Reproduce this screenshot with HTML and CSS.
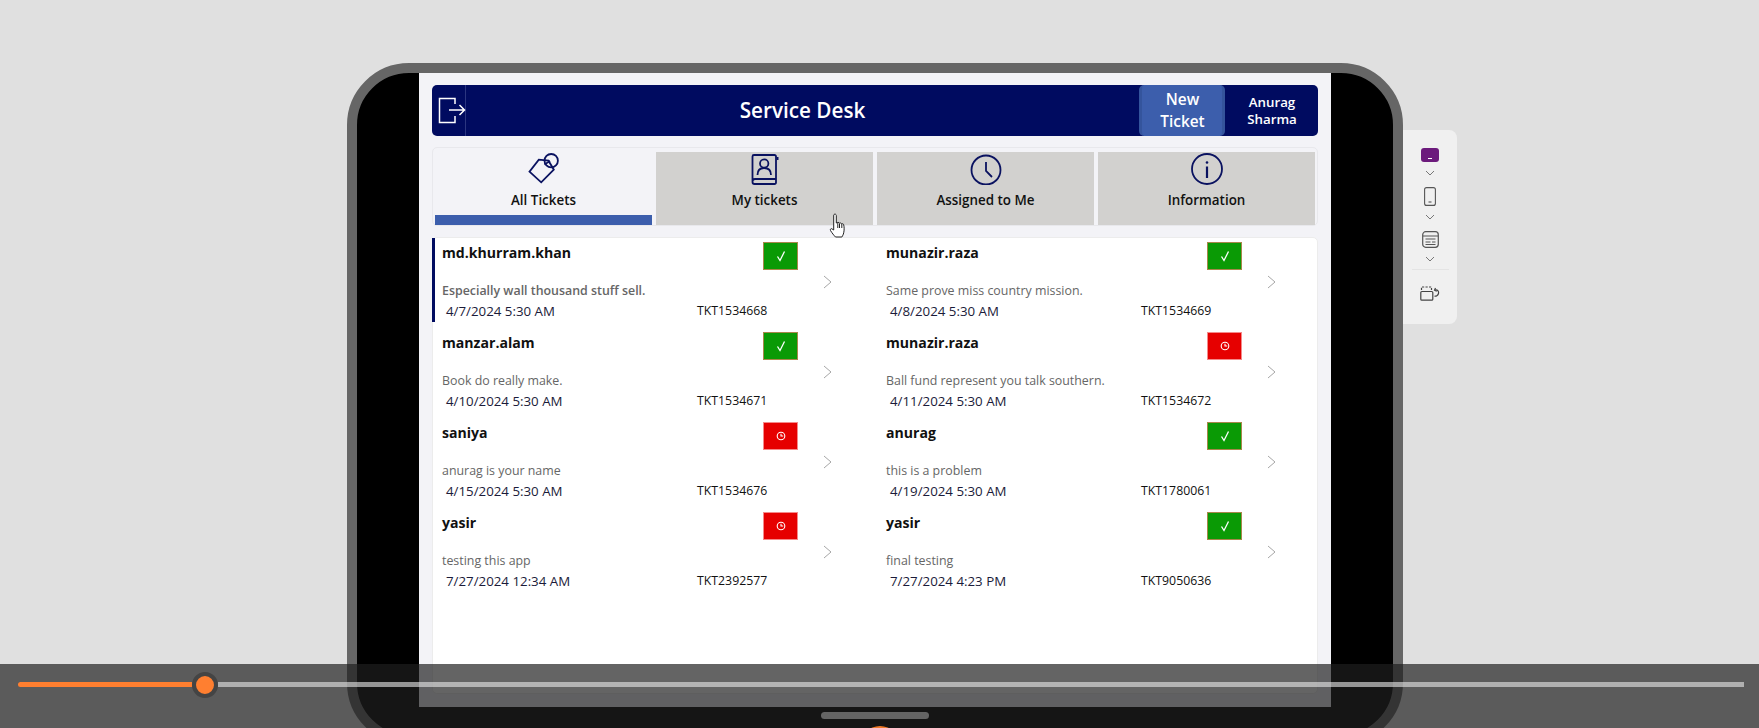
FILE: index.html
```html
<!DOCTYPE html>
<html lang="en">
<head>
  <meta charset="UTF-8" />
  <title>Service Desk</title>
  <link rel="stylesheet" href="styles.css">
</head>
<body>
  <div class="stage">
    <div class="device">
      <div class="screen">
        <header class="topbar">
          <div class="logout">
            <svg width="34" height="51" viewBox="0 0 34 51" fill="none" stroke="#fff" stroke-width="1.5"><path d="M23 19v-5.500H7.500v24H23V31"/><path d="M17 25h15.500M27.500 20l5 5-5 5"/></svg>
          </div>
          <h1 class="title">Service Desk</h1>
          <div class="new-ticket">New<br>Ticket</div>
          <div class="user">Anurag<br>Sharma</div>
        </header>

        <nav class="tabs">
          <div class="tab active">
            <svg class="tab-icon" viewBox="0 0 32 32" fill="none" stroke="#0a1260" stroke-width="1.800"><path d="M1.500 18.700 13.200 29.300 25.800 16.700 20.500 7.700 10.800 6.700z"/><circle cx="23.200" cy="7.700" r="6.700"/><path d="M16.500 11.500 22 8"/></svg>
            <span class="tab-label">All Tickets</span>
          </div>
          <div class="tab">
            <svg class="tab-icon" viewBox="0 0 32 32" fill="none" stroke="#0a1260" stroke-width="1.800"><path d="M27 26V3.500a1.500 1.500 0 0 0-1.500-1.500H5a1.500 1.500 0 0 0-1.500 1.500V29A2 2 0 0 0 5.500 31H25.500a1.500 1.500 0 0 0 1.500-1.500V26H6a2.500 2.500 0 0 0-2.500 2.500"/><circle cx="15.200" cy="10.500" r="4.200"/><path d="M8.500 22c0-5 3-7 6.700-7s6.800 2 6.800 7"/><path d="M27.500 4h2v3h-2" fill="#0a1260" stroke="none"/></svg>
            <span class="tab-label">My tickets</span>
          </div>
          <div class="tab">
            <svg class="tab-icon" viewBox="0 0 32 32" fill="none" stroke="#0a1260" stroke-width="1.800"><circle cx="16" cy="17" r="14.500"/><path d="M16 9v9l6 6"/></svg>
            <span class="tab-label">Assigned to Me</span>
          </div>
          <div class="tab">
            <svg class="tab-icon" viewBox="0 0 32 32" fill="none" stroke="#0a1260" stroke-width="1.800"><circle cx="16" cy="16" r="15"/><path d="M16 13.500V25" stroke-width="2.200"/><circle cx="16" cy="9.500" r="1.300" fill="#0a1260" stroke="none"/></svg>
            <span class="tab-label">Information</span>
          </div>
        </nav>

        <section class="list">
          <div class="ticket selected">
            <div class="ticket-main">
              <div class="ticket-top"><span class="name">md.khurram.khan</span><span class="status ok"><svg width="12" height="12" viewBox="0 0 12 12" fill="none" stroke="#fff" stroke-width="1.300"><path d="M2.500 6.500 5 10.500 9.500 1.500"/></svg></span></div>
              <p class="desc">Especially wall thousand stuff sell.</p>
              <div class="ticket-meta"><span class="date">4/7/2024 5:30 AM</span><span class="code">TKT1534668</span></div>
            </div>
            <svg class="chev" width="9" height="14" viewBox="0 0 9 14" fill="none" stroke="#a6a6a6"><path d="M1 1l7 6-7 6"/></svg>
          </div>
          <div class="ticket">
            <div class="ticket-main">
              <div class="ticket-top"><span class="name">munazir.raza</span><span class="status ok"><svg width="12" height="12" viewBox="0 0 12 12" fill="none" stroke="#fff" stroke-width="1.300"><path d="M2.500 6.500 5 10.500 9.500 1.500"/></svg></span></div>
              <p class="desc">Same prove miss country mission.</p>
              <div class="ticket-meta"><span class="date">4/8/2024 5:30 AM</span><span class="code">TKT1534669</span></div>
            </div>
            <svg class="chev" width="9" height="14" viewBox="0 0 9 14" fill="none" stroke="#a6a6a6"><path d="M1 1l7 6-7 6"/></svg>
          </div>
          <div class="ticket">
            <div class="ticket-main">
              <div class="ticket-top"><span class="name">manzar.alam</span><span class="status ok"><svg width="12" height="12" viewBox="0 0 12 12" fill="none" stroke="#fff" stroke-width="1.300"><path d="M2.500 6.500 5 10.500 9.500 1.500"/></svg></span></div>
              <p class="desc">Book do really make.</p>
              <div class="ticket-meta"><span class="date">4/10/2024 5:30 AM</span><span class="code">TKT1534671</span></div>
            </div>
            <svg class="chev" width="9" height="14" viewBox="0 0 9 14" fill="none" stroke="#a6a6a6"><path d="M1 1l7 6-7 6"/></svg>
          </div>
          <div class="ticket">
            <div class="ticket-main">
              <div class="ticket-top"><span class="name">munazir.raza</span><span class="status late"><svg width="10" height="10" viewBox="0 0 10 10" fill="none" stroke="#fff" stroke-width="1.100"><circle cx="5" cy="5" r="3.800"/><path d="M5 2.800V5h2.200"/></svg></span></div>
              <p class="desc">Ball fund represent you talk southern.</p>
              <div class="ticket-meta"><span class="date">4/11/2024 5:30 AM</span><span class="code">TKT1534672</span></div>
            </div>
            <svg class="chev" width="9" height="14" viewBox="0 0 9 14" fill="none" stroke="#a6a6a6"><path d="M1 1l7 6-7 6"/></svg>
          </div>
          <div class="ticket">
            <div class="ticket-main">
              <div class="ticket-top"><span class="name">saniya</span><span class="status late"><svg width="10" height="10" viewBox="0 0 10 10" fill="none" stroke="#fff" stroke-width="1.100"><circle cx="5" cy="5" r="3.800"/><path d="M5 2.800V5h2.200"/></svg></span></div>
              <p class="desc">anurag is your name</p>
              <div class="ticket-meta"><span class="date">4/15/2024 5:30 AM</span><span class="code">TKT1534676</span></div>
            </div>
            <svg class="chev" width="9" height="14" viewBox="0 0 9 14" fill="none" stroke="#a6a6a6"><path d="M1 1l7 6-7 6"/></svg>
          </div>
          <div class="ticket">
            <div class="ticket-main">
              <div class="ticket-top"><span class="name">anurag</span><span class="status ok"><svg width="12" height="12" viewBox="0 0 12 12" fill="none" stroke="#fff" stroke-width="1.300"><path d="M2.500 6.500 5 10.500 9.500 1.500"/></svg></span></div>
              <p class="desc">this is a problem</p>
              <div class="ticket-meta"><span class="date">4/19/2024 5:30 AM</span><span class="code">TKT1780061</span></div>
            </div>
            <svg class="chev" width="9" height="14" viewBox="0 0 9 14" fill="none" stroke="#a6a6a6"><path d="M1 1l7 6-7 6"/></svg>
          </div>
          <div class="ticket">
            <div class="ticket-main">
              <div class="ticket-top"><span class="name">yasir</span><span class="status late"><svg width="10" height="10" viewBox="0 0 10 10" fill="none" stroke="#fff" stroke-width="1.100"><circle cx="5" cy="5" r="3.800"/><path d="M5 2.800V5h2.200"/></svg></span></div>
              <p class="desc">testing this app</p>
              <div class="ticket-meta"><span class="date">7/27/2024 12:34 AM</span><span class="code">TKT2392577</span></div>
            </div>
            <svg class="chev" width="9" height="14" viewBox="0 0 9 14" fill="none" stroke="#a6a6a6"><path d="M1 1l7 6-7 6"/></svg>
          </div>
          <div class="ticket">
            <div class="ticket-main">
              <div class="ticket-top"><span class="name">yasir</span><span class="status ok"><svg width="12" height="12" viewBox="0 0 12 12" fill="none" stroke="#fff" stroke-width="1.300"><path d="M2.500 6.500 5 10.500 9.500 1.500"/></svg></span></div>
              <p class="desc">final testing</p>
              <div class="ticket-meta"><span class="date">7/27/2024 4:23 PM</span><span class="code">TKT9050636</span></div>
            </div>
            <svg class="chev" width="9" height="14" viewBox="0 0 9 14" fill="none" stroke="#a6a6a6"><path d="M1 1l7 6-7 6"/></svg>
          </div>
        </section>

        <!-- mouse pointer caught in the shot -->
        <svg class="pointer" width="18" height="26" viewBox="0 0 18 26" fill="#fff" stroke="#222" stroke-width="1"><path d="M5 1.500c1-.8 2.200-.3 2.300 1V10l1.500-.6c.9-.2 1.500.2 1.700.8.900-.5 1.700-.2 2 .6 1-.4 2 0 2.200 1 .6 2.500.6 5.500 0 8-.4 2-1.200 3-1.800 4.200H6.500C5 22.500 3 20 1.500 17.500c-.6-1 .2-2 1.200-1.800l2 1.300V3c0-.7 0-1.200.3-1.500z"/><path d="M8.800 10v5M10.500 10.500V15M12.800 11v4" fill="none"/></svg>
      </div>
      <div class="home-bar"></div>
    </div>

    <aside class="side">
      <span class="swatch"></span>
      <svg class="down" width="10" height="6" viewBox="0 0 10 6" fill="none" stroke="#777"><path d="M1 1l4 4 4-4"/></svg>
      <svg class="side-icon" width="12" height="19" viewBox="0 0 12 19" fill="none" stroke="#555" stroke-width="1.100"><rect x=".6" y=".6" width="10.800" height="17.800" rx="2"/><path d="M4.500 15h3"/></svg>
      <svg class="down" width="10" height="6" viewBox="0 0 10 6" fill="none" stroke="#777"><path d="M1 1l4 4 4-4"/></svg>
      <svg class="side-icon" width="17" height="17" viewBox="0 0 17 17" fill="none" stroke="#555" stroke-width="1.200"><rect x=".7" y=".7" width="15.600" height="15.600" rx="3"/><path d="M1 5h15M3.500 8h10M3.500 11h5M10 11h3.500M3.500 13.500h10" stroke-width="1"/></svg>
      <svg class="down" width="10" height="6" viewBox="0 0 10 6" fill="none" stroke="#777"><path d="M1 1l4 4 4-4"/></svg>
      <div class="side-line"></div>
      <svg class="side-icon" width="20" height="15" viewBox="0 0 20 15" fill="none" stroke="#444" stroke-width="1.200"><path d="M1.500 4V1h10v3" stroke-dasharray="2.200 1.300"/><rect x=".8" y="5.500" width="12" height="8.700" rx="1"/><path d="M15 4c3-.5 4 1.500 3.500 3.500S16 10.500 14.500 10"/><path d="M15.500 2 14.500 4.300 16.800 5.300"/></svg>
    </aside>
  </div>

  <div class="player">
    <span class="fill"></span>
    <span class="thumb"></span>
    <span class="rest"></span>
    <span class="peek"></span>
  </div>
</body>
</html>
```

FILE: styles.css
```css
body {
  margin: 0;
  height: 728px;
  overflow: hidden;
  background: #e0e0e0;
  font-family: "Open Sans", sans-serif;
  position: relative;
}
.stage {
  display: flex;
  align-items: flex-start;
  padding: 63px 0 0 347px;
}
.device {
  box-sizing: border-box;
  flex: none;
  width: 1056px;
  height: 682px;
  border: 10px solid #666;
  border-radius: 62px;
  background: #000;
  display: flex;
  flex-direction: column;
  align-items: center;
}
.screen {
  box-sizing: border-box;
  width: 912px;
  height: 634px;
  padding: 12px 13px 13px;
  background: #f3f3f7;
  display: flex;
  flex-direction: column;
  position: relative;
}
.home-bar {
  width: 108px;
  height: 7px;
  margin-top: 5px;
  border-radius: 4px;
  background: #fff;
}

/* top bar */
.topbar {
  height: 51px;
  flex: none;
  display: flex;
  background: #000b60;
  border-radius: 5px;
  color: white;
}
.logout {
  width: 33px;
  border-right: 1px solid #2b3680;
}
.logout svg {
  display: block;
}
.title {
  flex: 1;
  margin: 0;
  text-align: center;
  font-size: 20.700px;
  font-weight: 600;
  line-height: 51px;
}
.new-ticket {
  box-sizing: border-box;
  width: 86px;
  padding: 4px 0 0 1px;
  background: #3c5eac;
  border: 3px solid #34549c;
  border-top-width: 0;
  border-bottom-width: 0;
  border-radius: 5px;
  text-align: center;
  font-size: 15.400px;
  font-weight: 600;
  line-height: 22px;
}
.user {
  box-sizing: border-box;
  width: 93px;
  padding: 9px 0 0 1px;
  text-align: center;
  font-size: 13.300px;
  font-weight: 600;
  line-height: 17px;
}

/* tabs */
.tabs {
  box-sizing: border-box;
  height: 79px;
  flex: none;
  margin-top: 11px;
  padding: 4px 2px 0;
  display: grid;
  grid-template-columns: repeat(4, 217px);
  gap: 4px;
  border: 1px solid #e8e8ec;
  border-radius: 5px;
}
.tab {
  box-sizing: border-box;
  height: 73px;
  display: flex;
  flex-direction: column;
  align-items: center;
  background: #d2d1cf;
}
.tab.active {
  background: transparent;
  border-bottom: 10px solid #3c5eac;
}
.tab-icon {
  width: 32px;
  height: 32px;
  margin-top: 1px;
}
.tab-label {
  margin-top: 6px;
  font-size: 13.400px;
  font-weight: 600;
  line-height: 18px;
  color: #111;
}

/* ticket list */
.list {
  box-sizing: border-box;
  height: 457px;
  flex: none;
  margin-top: 11px;
  display: grid;
  grid-template-columns: 444px 440px;
  grid-auto-rows: 90px;
  align-content: start;
  background: white;
  border: 1px solid #ececec;
  border-radius: 5px;
}
.ticket {
  display: flex;
  padding: 4px 0 0 9px;
  position: relative;
}
.ticket.selected::before {
  content: "";
  position: absolute;
  left: -1px;
  top: 0;
  width: 3px;
  height: 84px;
  background: #000b60;
}
.ticket-main {
  width: 356px;
}
.ticket-top {
  height: 28px;
  display: flex;
  justify-content: space-between;
}
.name {
  font-size: 14.100px;
  font-weight: 700;
  line-height: 21px;
  color: #111;
}
.status {
  box-sizing: border-box;
  width: 35px;
  height: 28px;
  display: flex;
  align-items: center;
  justify-content: center;
}
.status.ok {
  background: #0a9a05;
  border: 1px solid #a8874a;
}
.status.late {
  background: #e60000;
  border: 1px solid #f58a8a;
}
.desc {
  margin: 12px 0 0;
  font-size: 12.400px;
  line-height: 18px;
  color: #666;
}
.selected .desc {
  font-weight: 600;
}
.ticket-meta {
  display: flex;
  margin-top: 2px;
  line-height: 18px;
}
.date {
  width: 255px;
  padding-left: 4px;
  box-sizing: border-box;
  font-size: 13.300px;
  color: #1b1b3a;
}
.code {
  font-size: 12.300px;
  color: #111;
}
.chev {
  margin: 33px 0 0 25px;
}
.pointer {
  position: absolute;
  left: 410px;
  top: 140px;
}

/* side toolbar */
.side {
  box-sizing: border-box;
  width: 54px;
  height: 194px;
  margin-top: 67px;
  padding-top: 18px;
  background: #f0f0f0;
  border-radius: 0 8px 8px 0;
  display: flex;
  flex-direction: column;
  align-items: center;
}
.swatch {
  width: 18px;
  height: 14px;
  border-radius: 3px;
  background: #6c1a7c;
  position: relative;
}
.swatch::after {
  content: "";
  position: absolute;
  left: 7px;
  bottom: 3px;
  width: 4px;
  height: 1px;
  background: white;
}
.down {
  margin: 8px 0 7px;
}
.side-icon {
  display: block;
  margin-top: 4px;
}
.side-line {
  width: 37px;
  height: 1px;
  margin-bottom: 12px;
  background: #e4e4e4;
}

/* player bar */
.player {
  position: absolute;
  left: 0;
  right: 0;
  bottom: 0;
  height: 64px;
  padding: 8px 15px 0 18px;
  box-sizing: border-box;
  background: rgba(30, 30, 30, 0.69);
  display: flex;
  align-items: flex-start;
}
.fill {
  width: 174px;
  height: 5px;
  margin-top: 10px;
  border-radius: 3px 0 0 3px;
  background: #ff7f30;
}
.thumb {
  box-sizing: border-box;
  flex: none;
  width: 26px;
  height: 26px;
  border: 4px solid #444;
  border-radius: 50%;
  background: #ff7f30;
}
.rest {
  flex: 1;
  height: 5px;
  margin-top: 10px;
  background: rgba(231, 231, 231, 0.61);
}
.peek {
  position: absolute;
  left: 860px;
  top: 62px;
  width: 40px;
  height: 40px;
  border-radius: 50%;
  background: #f07a28;
}
```
